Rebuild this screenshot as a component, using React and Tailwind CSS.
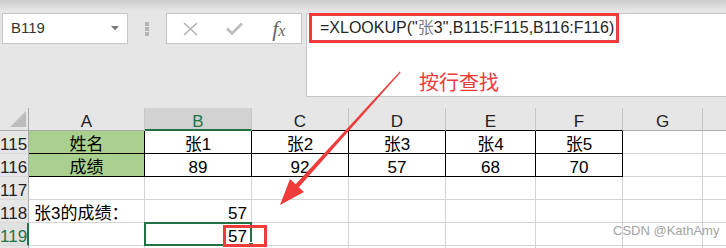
import React from 'react'

const font = "font-['Liberation_Sans','Noto_Sans_CJK_SC',sans-serif]"
const cols = ['A', 'B', 'C', 'D', 'E', 'F', 'G', '']

const names = ['张1', '张2', '张3', '张4', '张5']
const scores = [89, 92, 57, 68, 70]

function RowHead({ n, active }) {
  return (
    <div
      className={`h-[23px] pr-[3px] pt-[4px] leading-[19px] text-right text-[17px] border-b border-[#d8d8d8] overflow-hidden whitespace-nowrap ${
        active ? 'border-r-2 border-r-[#217346] text-[#217346] bg-[#e1e1e1]' : 'border-r border-r-[#ababab] text-[#222] bg-[#e6e6e6]'
      }`}
    >
      {n}
    </div>
  )
}

function Cell({ children, align = 'center', edge = 'border-[#d4d4d4]', bg = 'bg-white', extra = '' }) {
  const al = align === 'left' ? 'text-left pl-[5px]' : align === 'right' ? 'text-right pr-[4px]' : 'text-center'
  return (
    <div className={`relative h-[23px] pt-[4px] leading-[19px] text-[17px] text-black border-r border-b whitespace-nowrap ${edge} ${bg} ${al} ${extra}`}>
      {children}
    </div>
  )
}

export default function App() {
  return (
    <div className={`relative w-[726px] h-[248px] overflow-hidden bg-[#e6e6e6] ${font}`}>
      {/* formula bar */}
      <div className="h-[108px] pt-[13px] flex items-start bg-[linear-gradient(to_bottom,#cdcdcd,#e6e6e6_11px)]">
        <div className="ml-[2px] w-[126px] h-[31px] bg-white border border-[#c6c6c6] flex items-center justify-between pl-[8px] pr-[8px] text-[15px] text-[#333]">
          <span>B119</span>
          <svg width="8" height="5" viewBox="0 0 8 5"><polygon points="0,0 8,0 4,4.5" fill="#7a7a7a" /></svg>
        </div>
        <div className="w-[38px] flex flex-col items-center pt-[9px] gap-[1px]">
          <div className="w-[4px] h-[4px] bg-[#b5b5b5]" />
          <div className="w-[4px] h-[4px] bg-[#b5b5b5]" />
          <div className="w-[4px] h-[4px] bg-[#b5b5b5]" />
        </div>
        <div className="w-[136px] h-[31px] bg-white border border-[#c6c6c6] flex items-center pl-[1px]">
          <div className="w-[45px] flex justify-center">
            <svg width="15" height="14" viewBox="0 0 15 14">
              <path d="M1 1 L14 13 M14 1 L1 13" stroke="#b3b3b3" strokeWidth="1.6" fill="none" />
            </svg>
          </div>
          <div className="w-[45px] flex justify-center">
            <svg width="17" height="13" viewBox="0 0 17 13">
              <path d="M1 6.5 L6 11.5 L16 1.5" stroke="#bcbcbc" strokeWidth="2.6" fill="none" />
            </svg>
          </div>
          <div className="w-[45px] flex justify-center items-baseline text-[#666] italic font-['Liberation_Serif',serif]">
            <span className="text-[22px]">f</span>
            <span className="text-[16px]">x</span>
          </div>
        </div>
        <div className="ml-[4px] flex-1 h-[84px] bg-white border-l border-y border-[#c6c6c6] flex flex-col items-start">
          <div className="-mt-px ml-[2px] w-[310px] h-[30px] border-[3px] border-[#ef3b3b] pl-[8px] flex items-center text-[16px] text-[#262626] whitespace-nowrap">
            =XLOOKUP("<span className="text-[#7a7f86]">张</span>3",B115:F115,B116:F116)
          </div>
          <div className="mt-[30px] ml-[112px] text-[20px] leading-[20px] text-[#ef3b3b]">按行查找</div>
        </div>
      </div>

      {/* sheet grid */}
      <div className="grid grid-cols-[29px_116px_107px_97px_97px_90px_87px_80px_80px]">
        <div className="h-[23px] border-r border-b border-[#ababab] bg-[#e6e6e6] flex items-end pl-[10px] pb-[3px]">
          <svg width="16" height="16" viewBox="0 0 16 16"><polygon points="16,0 16,16 0,16" fill="#bdbdbd" /></svg>
        </div>
        {cols.map((c, i) => (
          <div
            key={i}
            className={`h-[23px] pt-[4px] leading-[19px] text-center text-[17px] border-r border-r-[#c6c6c6] ${
              i === 1
                ? 'bg-[#d2d2d2] text-[#217346] border-b-2 border-b-[#217346]'
                : i >= 2 && i <= 5
                ? 'bg-[#e6e6e6] text-[#222] border-b border-b-black'
                : 'bg-[#e6e6e6] text-[#222] border-b border-b-[#ababab]'
            }`}
          >
            {c}
          </div>
        ))}

        {/* 115 */}
        <RowHead n={115} />
        <Cell edge="border-black" bg="bg-[#a9d08e]">姓名</Cell>
        {names.map(n => (
          <Cell key={n} edge="border-black">{n}</Cell>
        ))}
        <Cell />
        <Cell />

        {/* 116 */}
        <RowHead n={116} />
        <Cell edge="border-black" bg="bg-[#a9d08e]">成绩</Cell>
        {scores.map((s, i) => (
          <Cell key={i} edge="border-black">{s}</Cell>
        ))}
        <Cell />
        <Cell />

        {/* 117 */}
        <RowHead n={117} />
        {cols.map((c, i) => <Cell key={i} />)}

        {/* 118 */}
        <RowHead n={118} />
        <Cell align="left" extra="overflow-visible">张3的成绩：</Cell>
        <Cell align="right">57</Cell>
        {cols.slice(2).map((c, i) => <Cell key={i} />)}

        {/* 119 */}
        <RowHead n={119} active />
        <Cell />
        <Cell align="right" extra="z-10">
          57
          <div className="absolute -left-px -top-px -right-px -bottom-px border-2 border-[#217346]" />
          <div className="absolute right-[-3px] bottom-[-3px] w-[6px] h-[6px] bg-[#217346] border border-white" />
          <div className="absolute left-[78px] top-[2px] w-[44px] h-[22px] border-[3px] border-[#ef3b3b]" />
        </Cell>
        {cols.slice(2).map((c, i) => <Cell key={i} />)}

        {/* 120, only its top edge shows */}
        <RowHead n="" />
        {cols.map((c, i) => <Cell key={i} />)}
      </div>

      {/* annotation arrow */}
      <svg className="absolute left-0 top-0 pointer-events-none" width="726" height="248" viewBox="0 0 726 248">
        <polygon points="400.6,72.4 298.6,187.4 295.4,184.6 399.8,71.6" fill="#ef3b3b" />
        <polygon points="280,205 304,192 290,179" fill="#ef3b3b" />
      </svg>

      <div className="absolute left-[613px] top-[223px] text-[13px] leading-[15px] text-[#a3a3a3] font-['Liberation_Sans',sans-serif]">
        CSDN @KathAmy
      </div>
    </div>
  )
}
